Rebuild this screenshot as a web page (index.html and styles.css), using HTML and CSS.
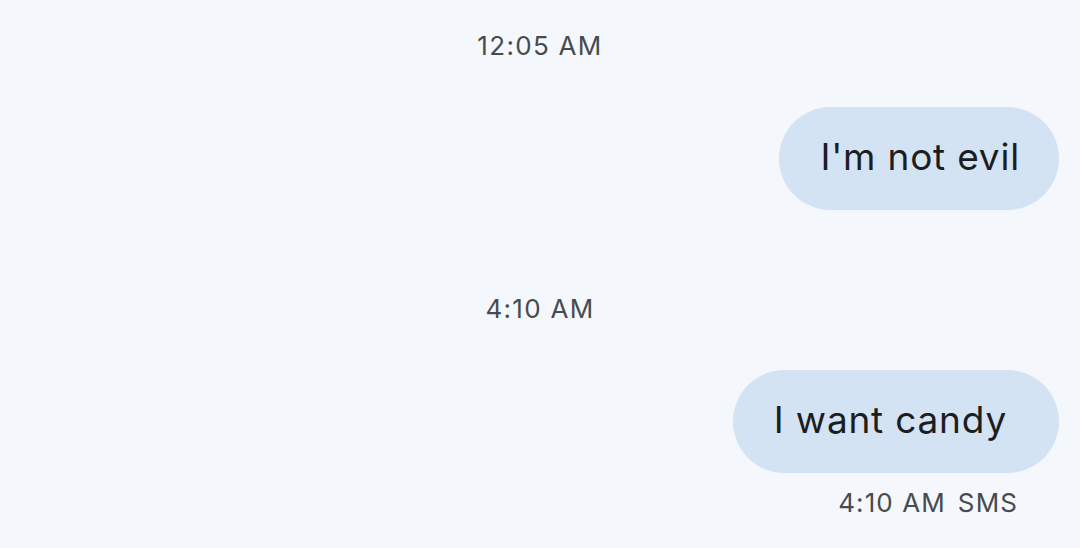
FILE: index.html
```html
<!DOCTYPE html>
<html>
<head>
<meta charset="utf-8">
<link rel="stylesheet" href="styles.css">
</head>
<body>
<main class="thread">
  <div class="stamp stamp-first">12:05 AM</div>
  <div class="row"><div class="bubble">I'm not evil</div></div>
  <div class="stamp stamp-second">4:10 AM</div>
  <div class="row"><div class="bubble bubble-wide">I want candy</div></div>
  <div class="meta">4:10 AM<span class="meta-sms">SMS</span></div>
</main>
</body>
</html>
```
FILE: styles.css
```css
html, body {
  margin: 0;
  padding: 0;
  background: #f4f8fc;
  height: 100%;
  overflow: hidden;
}
.thread {
  display: flex;
  flex-direction: column;
  padding: 0 21px 0 0;
  font-family: Inter, Roboto, sans-serif;
}
.stamp {
  text-align: center;
  font-size: 26px;
  line-height: 30px;
  letter-spacing: 1.3px;
  color: #474b50;
  padding-left: 21px;
}
.stamp-first { margin-top: 31px; }
.stamp-second { margin-top: 84px; }
.row {
  display: flex;
  justify-content: flex-end;
}
.row:nth-child(2) { margin-top: 46px; }
.row:nth-child(4) { margin-top: 46px; }
.bubble {
  background: #d3e3f3;
  color: #1c1d20;
  font-size: 37px;
  line-height: 100px;
  height: 103px;
  letter-spacing: 0.8px;
  border-radius: 52px;
  padding: 0 39px 0 41px;
  white-space: nowrap;
}
.bubble-wide {
  padding-right: 52px;
}
.meta {
  align-self: flex-end;
  margin-top: 15px;
  margin-right: 41px;
  font-size: 26px;
  line-height: 30px;
  letter-spacing: 1.1px;
  color: #474b50;
}
.meta-sms { margin-left: 12px; }
```
